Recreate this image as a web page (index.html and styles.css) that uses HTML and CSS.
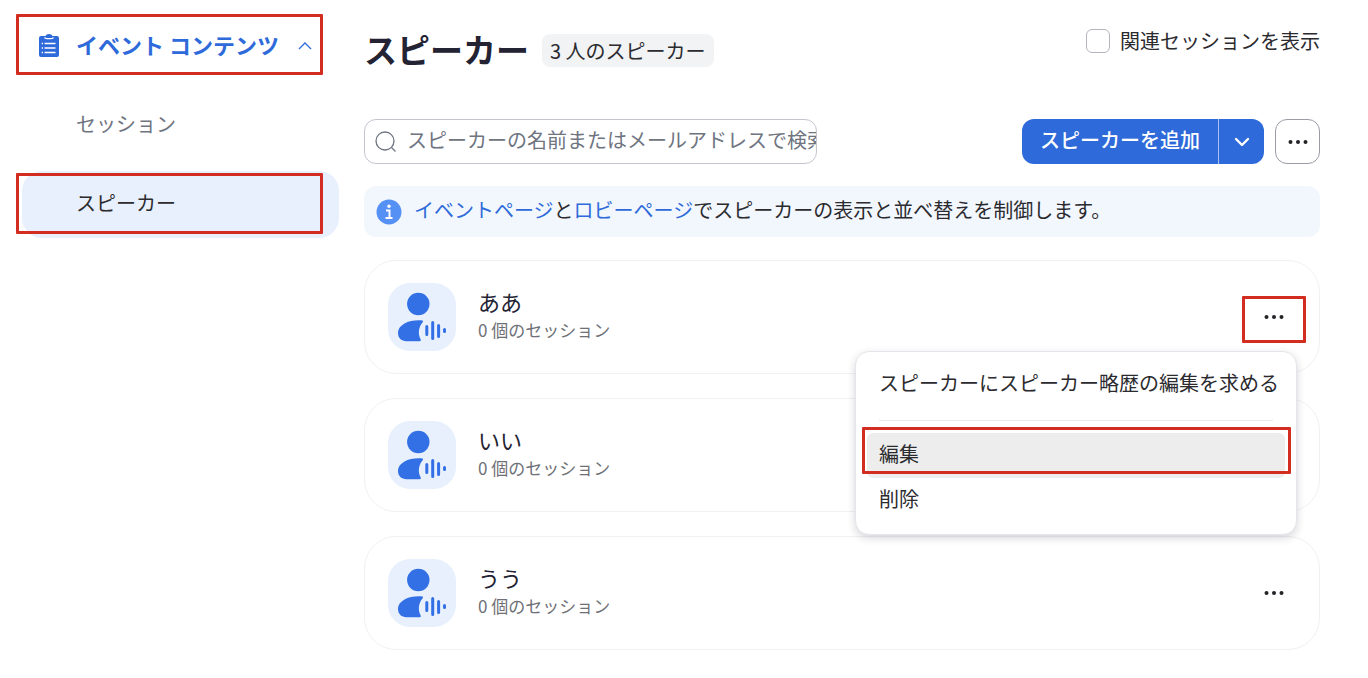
FILE: index.html
```html
<!DOCTYPE html>
<html lang="ja">
<head>
    <meta charset="utf-8">
    <title>スピーカー</title>
    <meta name="viewport" content="width=device-width, initial-scale=1.0">
    <link rel="stylesheet" href="styles.css">
</head>
<body>
    <!-- Shared icons -->
    <svg class="sprite" aria-hidden="true">
        <symbol id="dots" viewBox="0 0 22 6">
            <circle cx="3.500" cy="3" r="2"/><circle cx="11" cy="3" r="2"/><circle cx="18.500" cy="3" r="2"/>
        </symbol>
        <symbol id="speaker" viewBox="0 0 68 68">
            <circle cx="30.3" cy="21" r="11.2"/>
            <path d="M34.500 37.500C28 36.800 21 38 16.500 40.500C12.500 42.800 10 46 10 50C10 55 13.500 58.200 18.500 58.200H31.500C32.800 58.200 33.200 57.200 32.600 56.200C30.200 51.800 29.900 45 34.500 39.500C35.300 38.500 35.100 37.600 34.500 37.500Z"/>
            <path class="wave" d="M38.800 43.500V51.500M44.700 39.500V55.500M50.600 42.500V53.500M56.500 46.500V48.500"/>
        </symbol>
    </svg>

    <div class="page">
        <nav class="sidebar">
            <button class="group" type="button" aria-expanded="true">
                <svg class="clipboard" viewBox="0 0 20 24">
                    <path d="M2 2h4.500c.6-1.200 1.700-2 3.500-2s2.900.8 3.500 2H18a2 2 0 0 1 2 2v17a2 2 0 0 1-2 2H2a2 2 0 0 1-2-2V4a2 2 0 0 1 2-2z"/>
                    <path class="lines" d="M5.500 3.500c1 1.600 8 1.600 9 0M5.500 9.500H16.500M5.500 14H16.500M5.500 18.500H16.500M2.700 9.500h1.300M2.700 14h1.300M2.700 18.500h1.300"/>
                </svg>
                <span class="group-name">イベント コンテンツ</span>
                <svg class="caret" viewBox="0 0 14 8"><path d="M1 7l6-6 6 6"/></svg>
                <span class="mark mark-group"></span>
            </button>
            <a class="link" href="#">セッション</a>
            <a class="link active" href="#">スピーカー<span class="mark mark-link"></span></a>
        </nav>

        <main class="main">
            <header class="header">
                <h1>スピーカー</h1>
                <span class="count">3 人のスピーカー</span>
                <label class="check"><input type="checkbox">関連セッションを表示</label>
            </header>

            <div class="toolbar">
                <div class="search">
                    <svg viewBox="0 0 22 22"><circle cx="10" cy="10" r="9"/><path d="M16.500 16.500L20.500 20.500"/></svg>
                    <input type="text" aria-label="スピーカーを検索" placeholder="スピーカーの名前またはメールアドレスで検索">
                </div>
                <div class="split">
                    <button class="add" type="button">スピーカーを追加</button>
                    <button class="drop" type="button" aria-label="その他の追加方法">
                        <svg viewBox="0 0 16 10"><path d="M2 2l6 6 6-6"/></svg>
                    </button>
                </div>
                <button class="more" type="button" aria-label="その他"><svg class="dots"><use href="#dots"/></svg></button>
            </div>

            <div class="info">
                <svg viewBox="0 0 26 26">
                    <circle cx="13" cy="13" r="12.500"/>
                    <circle class="fg" cx="13" cy="7.200" r="1.700"/>
                    <path class="stem" d="M10 11.500H13.500V19M9.500 19H16.500"/>
                </svg>
                <p><a href="#">イベントページ</a>と<a href="#">ロビーページ</a>でスピーカーの表示と並べ替えを制御します。</p>
            </div>

            <ul class="list">
                <li class="card">
                    <svg class="avatar"><use href="#speaker"/></svg>
                    <div class="person">
                        <h2>ああ</h2>
                        <p>0 個のセッション</p>
                    </div>
                    <button class="actions" type="button" aria-label="操作"><svg class="dots"><use href="#dots"/></svg><span class="mark mark-actions"></span></button>
                    <div class="menu">
                        <button type="button">スピーカーにスピーカー略歴の編集を求める</button>
                        <hr>
                        <button class="selected" type="button">編集<span class="mark mark-edit"></span></button>
                        <button type="button">削除</button>
                    </div>
                </li>
                <li class="card">
                    <svg class="avatar"><use href="#speaker"/></svg>
                    <div class="person">
                        <h2>いい</h2>
                        <p>0 個のセッション</p>
                    </div>
                </li>
                <li class="card">
                    <svg class="avatar"><use href="#speaker"/></svg>
                    <div class="person">
                        <h2>うう</h2>
                        <p>0 個のセッション</p>
                    </div>
                    <button class="actions" type="button" aria-label="操作"><svg class="dots"><use href="#dots"/></svg></button>
                </li>
            </ul>
        </main>
    </div>
</body>
</html>
```
FILE: styles.css
```css
* {
    box-sizing: border-box;
}

body {
    margin: 0;
    background: #fff;
    color: #2b2b2f;
    font-family: "Noto Sans CJK JP", sans-serif;
    font-size: 20px;
    line-height: 24px;
}

h1, h2, p, ul {
    margin: 0;
    padding: 0;
}

button, input {
    font: inherit;
    color: inherit;
}

button {
    padding: 0;
    border: none;
    background: none;
    cursor: pointer;
}

a {
    color: #2e6ad9;
    text-decoration: none;
}

svg {
    flex: none;
}

.sprite {
    position: absolute;
    width: 0;
    height: 0;
}

.page {
    display: flex;
    gap: 25px;
    padding: 0 48px 24px 22px;
}

/* Red frames round the steps to click */
.mark {
    position: absolute;
    z-index: 3;
    border: 3px solid #d32d22;
    border-radius: 1px;
    pointer-events: none;
}

/* Sidebar */
.sidebar {
    flex: none;
    display: flex;
    flex-direction: column;
    gap: 12px;
    width: 317px;
    padding-top: 12px;
}

.group {
    position: relative;
    display: flex;
    align-items: center;
    height: 68px;
    padding: 0 27px 0 17px;
    color: #2e6ad9;
    font-size: 22px;
    font-weight: bold;
}

.group-name {
    flex: 1;
    margin-left: 17px;
    padding-bottom: 4px;
    text-align: left;
    white-space: nowrap;
}

.clipboard {
    width: 20px;
    height: 24px;
    fill: #2e6ad9;
}

.clipboard .lines {
    fill: none;
    stroke: #fff;
    stroke-width: 1.3;
}

.caret {
    width: 14px;
    height: 8px;
    fill: none;
    stroke: #2e6ad9;
    stroke-width: 1.3;
}

.link {
    position: relative;
    display: flex;
    align-items: center;
    height: 67px;
    padding: 0 0 4px 54px;
    border-radius: 20px;
    color: #6e7480;
}

.link.active {
    background: #e8f0fd;
    color: #2b2b2f;
}

.mark-group {
    inset: 2px 16px 5px -6px;
}

.mark-link {
    inset: 2px 16px 4px -6px;
}

/* Main column */
.main {
    flex: 1;
    min-width: 0;
    padding-top: 29px;
}

.header {
    display: flex;
    align-items: flex-start;
    margin-bottom: 50px;
}

h1 {
    color: #232333;
    font-size: 33px;
    line-height: 40px;
}

.count {
    margin: 5px 0 0 13px;
    padding: 0 8px;
    border-radius: 8px;
    background: #f2f3f5;
    line-height: 33px;
}

.check {
    display: flex;
    align-items: center;
    gap: 10px;
    margin-left: auto;
}

.check input {
    appearance: none;
    width: 24px;
    height: 24px;
    margin: 0;
    border: 1px solid #b4b6bf;
    border-radius: 6px;
    background: #fff;
}

.toolbar {
    display: flex;
    align-items: stretch;
    height: 45px;
}

.search {
    display: flex;
    align-items: center;
    gap: 10px;
    width: 453px;
    padding-left: 10px;
    border: 1px solid #c4c6cf;
    border-radius: 12px;
    overflow: hidden;
}

.search svg {
    width: 22px;
    height: 22px;
    fill: none;
    stroke: #6e7480;
    stroke-width: 1.3;
}

.search input {
    flex: 1;
    min-width: 0;
    height: 100%;
    padding: 0 0 4px;
    border: none;
    outline: none;
    background: none;
}

.search input::placeholder {
    color: #6e7480;
    opacity: 1;
}

.split {
    display: flex;
    margin-left: auto;
    border-radius: 12px;
    overflow: hidden;
    background: #2e6ad9;
    color: #fff;
}

.add {
    width: 196px;
    padding-bottom: 4px;
    font-weight: 500;
}

.drop {
    display: flex;
    align-items: center;
    justify-content: center;
    width: 46px;
    border-left: 1px solid #a9c3f2;
}

.drop svg {
    width: 16px;
    height: 10px;
    fill: none;
    stroke: #fff;
    stroke-width: 2.4;
    stroke-linecap: round;
    stroke-linejoin: round;
}

.more {
    width: 45px;
    margin-left: 11px;
    border: 1px solid #9a9ca6;
    border-radius: 12px;
}

.dots {
    display: block;
    width: 22px;
    height: 6px;
    margin: 0 auto;
    fill: #232328;
}

.info {
    display: flex;
    align-items: center;
    gap: 12px;
    margin: 22px 0 23px;
    padding: 12px 12px 11px;
    border-radius: 12px;
    background: #f2f7fe;
}

.info svg {
    width: 26px;
    height: 26px;
    fill: #5590f5;
}

.info .fg {
    fill: #fff;
}

.info .stem {
    fill: none;
    stroke: #fff;
    stroke-width: 2;
}

.info p {
    padding-bottom: 4px;
}

/* Speaker cards */
.list {
    display: flex;
    flex-direction: column;
    gap: 23px;
    list-style: none;
}

.card {
    position: relative;
    display: flex;
    align-items: center;
    padding: 22px 13px 22px 23px;
    border: 1px solid #f1f1f3;
    border-radius: 32px;
}

.card + .card {
    margin-top: 1px;
}

.avatar {
    width: 68px;
    height: 68px;
    border-radius: 22px;
    background: #e8f0fd;
    fill: #3370e6;
}

.wave {
    fill: none;
    stroke: #3370e6;
    stroke-width: 3;
    stroke-linecap: round;
}

.person {
    flex: 1;
    margin-left: 22px;
    padding-bottom: 6px;
}

.person h2 {
    color: #232333;
    font-size: 22px;
    font-weight: normal;
    line-height: 32px;
}

.person p {
    color: #6e7076;
    font-size: 17px;
    line-height: 26px;
}

.actions {
    position: relative;
    width: 64px;
    height: 46px;
}

.mark-actions {
    inset: 2px 0 -3px 0;
}

.menu {
    position: absolute;
    z-index: 2;
    top: 90px;
    right: 22px;
    width: 442px;
    padding: 10px 11px 11px;
    border: 1px solid #e4e5ea;
    border-radius: 14px;
    background: #fff;
    box-shadow: 0 3px 8px rgba(30, 30, 50, 0.18);
}

.menu button {
    position: relative;
    display: block;
    width: 100%;
    height: 45px;
    padding: 0 12px 4px;
    border-radius: 6px;
    text-align: left;
    white-space: nowrap;
}

.menu .selected {
    background: #ededed;
}

.menu hr {
    margin: 13px 12px 12px;
    border: none;
    border-top: 1px solid #e9eaee;
}

.mark-edit {
    inset: -6px -6px 4px -5px;
}
```
